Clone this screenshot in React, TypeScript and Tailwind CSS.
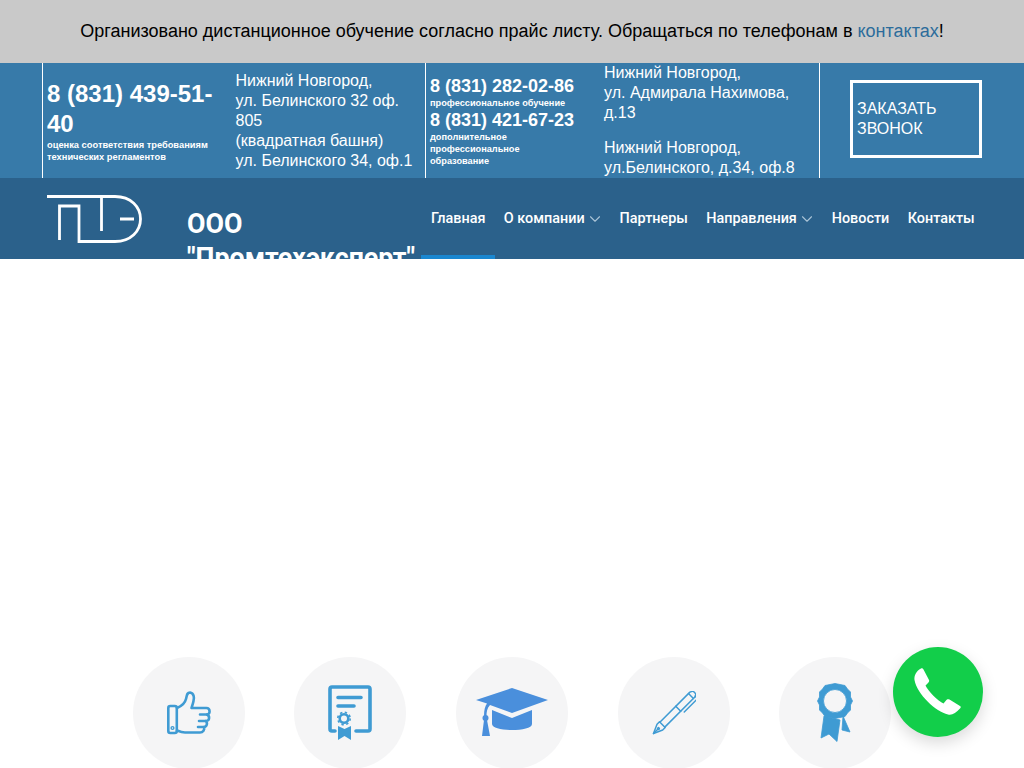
import React from "react";
import { ChevronDown } from "lucide-react";

const navItems = [
  { label: "Главная", active: true },
  { label: "О компании", sub: true },
  { label: "Партнеры" },
  { label: "Направления", sub: true },
  { label: "Новости" },
  { label: "Контакты" },
];

const ThumbIcon = () => (
  <svg width="44" height="44" viewBox="0 0 44 44" fill="none" stroke="#3f9bd3" strokeWidth="2.6" strokeLinejoin="round" strokeLinecap="round">
    <rect x="1.300" y="15" width="8.500" height="27" rx="2" />
    <circle cx="5.500" cy="37" r="1.400" strokeWidth="1.400" />
    <path d="M10 17 C15 15 18 12 19 8 C20 4 20 1.500 23 1.500 C27 2 27.500 7 26.500 10 C26 13 25 15 24.500 17 L39.500 17 C43.500 17 43.500 23.500 40 23.500 C43 25 43 30 38.500 30 C41 31.500 40 36 37 36 C38 38.500 36 41.500 33 41.500 L18 41.500 C15 41.500 12.500 40.500 10 39.500" />
    <path d="M33 23.500 L40 23.500 M32 30 L38.500 30 M31 36 L37 36" />
  </svg>
);

const CertificateIcon = () => (
  <svg width="44" height="56" viewBox="0 0 44 56" fill="none" stroke="#3f9bd3" strokeWidth="3.600" strokeLinecap="round" strokeLinejoin="round">
    <path d="M7 46 L4 46 C2.500 46 2 45 2 44 L2 4 C2 2.500 3 2 4 2 L40 2 C41.500 2 42 3 42 4 L42 44 C42 45 41.500 46 40 46 L28 46" />
    <path d="M10 12.500 L33 12.500 M10 21 L26 21" />
    <circle cx="16" cy="33.500" r="4.300" strokeWidth="2.600" />
    <circle cx="16" cy="33.500" r="6.200" strokeWidth="1.600" strokeLinecap="butt" strokeDasharray="2.400 2.470" />
    <path d="M10 41 L10 55 L16.500 51 L23 55 L23 41 L16.500 44 Z" fill="#3f9bd3" stroke="none" />
  </svg>
);

const CapIcon = () => (
  <svg width="72" height="50" viewBox="0 0 72 50" fill="#4a8fdc">
    <path d="M36 0 L72 12 L36 25 L14 17 C11 20 10.500 24 10.500 28 L8 28 C8 22 9 18 11 15.500 L0 12 Z" />
    <path d="M16 22 L36 30 L56 22 L56 36 C56 44 16 44 16 36 Z" />
    <circle cx="9.500" cy="30" r="3" />
    <path d="M8 32 L11 32 L14 48 L6 48 Z" />
  </svg>
);

const PenIcon = () => (
  <svg width="44" height="44" viewBox="0 0 44 44" fill="none" stroke="#3f9bd3" strokeWidth="1.500" strokeLinejoin="round" strokeLinecap="round">
    <g transform="rotate(45 22 22)">
      <path d="M22 51 L18 42 L18 38.500 L26 38.500 L26 42 Z" />
      <path d="M22 51 L22 45" />
      <circle cx="22" cy="44" r="0.900" />
      <path d="M18.500 38.500 L18.500 -4 L20 -7 L24 -7 L25.500 -4 L25.500 38.500" />
      <path d="M18.500 16 L25.500 16 M18.500 -2 L25.500 -2" />
      <path d="M25.500 -5 L28.500 -5 L28.500 14" />
    </g>
  </svg>
);

const MedalIcon = () => (
  <svg width="36" height="60" viewBox="0 0 36 60" fill="#3f9bd3" stroke="#3f9bd3" strokeWidth="0.800" strokeLinejoin="round">
    <path d="M7 33 L23 37 L20 58.500 L12 51 L4 55 Z" />
    <path d="M26 33 L33 49 L25 47 Z" />
    <path
      fillRule="evenodd"
      d="M18 0.500 L23 1.500 L28 2.500 L30.500 6 L33.500 9 L33.500 14 L35.500 18 L33.500 22 L33.500 27 L30.500 30 L28 33.500 L23 34.500 L18 35.500 L13 34.500 L8 33.500 L5.500 30 L2.500 27 L2.500 22 L0.500 18 L2.500 14 L2.500 9 L5.500 6 L8 2.500 L13 1.500 Z M18 6.500 A11.500 11.500 0 1 0 18.010 29.500 A11.500 11.500 0 1 0 18 6.500 Z"
    />
  </svg>
);

const PhoneIcon = () => (
  <svg width="48" height="48" viewBox="0 0 48 48" fill="#ffffff">
    <path d="M7 0.500 C8 0 9 0.500 9.500 1.500 L15 12 C15.500 13 15 14 14 15 L11.500 17.500 C14 23 24 33 29.500 35.500 L32 32.500 C33 31 34 31 35.500 31.500 L46 38 C47 38.500 47 39.500 46 40.500 C42 45 38 47.500 34 46.500 C22 44 3 26 0.500 12 C0 8 2 3 7 0.500 Z" />
  </svg>
);

const badges = [
  <ThumbIcon />,
  <CertificateIcon />,
  <CapIcon />,
  <PenIcon />,
  <MedalIcon />,
];

export default function App() {
  return (
    <div className="relative h-screen overflow-hidden bg-white font-['Liberation_Sans',Arial,sans-serif]">
      {/* Notice */}
      <div className="flex h-[63px] items-center justify-center bg-[#c9c9c9] text-[18px] text-black">
        <p>
          Организовано дистанционное обучение согласно прайс листу. Обращаться по телефонам в{" "}
          <span className="text-[#2c6c9b]">контактах</span>!
        </p>
      </div>

      {/* Contacts */}
      <div className="flex h-[115px] bg-[#377aa9] pl-[42px] text-white">
        <div className="flex w-[383px] border-l border-white pl-1">
          <div className="w-[188.500px] pt-4">
            <div className="text-[24px] leading-[30px] font-bold">8 (831) 439-51-40</div>
            <div className="w-[170px] text-[9.300px] leading-3 font-bold">
              оценка соответствия требованиям технических регламентов
            </div>
          </div>
          <div className="w-[182px] pt-2 text-[16px] leading-[19.950px]">
            Нижний Новгород,
            <br />
            ул. Белинского 32 оф. 805
            <br />
            (квадратная башня)
            <br />
            ул. Белинского 34, оф.1
          </div>
        </div>
        <div className="flex w-[394px] border-l border-white pl-1">
          <div className="w-[174px] pt-3">
            <div className="text-[18px] leading-[22px] font-bold">8 (831) 282-02-86</div>
            <div className="text-[9.200px] leading-3 font-bold">профессиональное обучение</div>
            <div className="text-[18px] leading-[22px] font-bold">8 (831) 421-67-23</div>
            <div className="w-[120px] text-[9.200px] leading-3 font-bold">
              дополнительное профессиональное образование
            </div>
          </div>
          <div className="w-[200px] text-[16px] leading-[19.800px]">
            <p>
              Нижний Новгород,
              <br />
              ул. Адмирала Нахимова, д.13
            </p>
            <p className="mt-4">
              Нижний Новгород,
              <br />
              ул.Белинского, д.34, оф.8
            </p>
          </div>
        </div>
        <div className="border-l border-white pt-[17px] pl-[30px]">
          <div className="flex h-[78px] w-[132px] items-center border-[3px] border-white pl-1 text-[16px] leading-5">
            ЗАКАЗАТЬ
            <br />
            ЗВОНОК
          </div>
        </div>
      </div>

      {/* Navigation */}
      <div className="flex h-[81px] overflow-hidden bg-[#2b618b] pl-[46px]">
        <svg className="mt-[17px] shrink-0" width="96" height="48" viewBox="0 0 96 48" fill="none" stroke="#ffffff" strokeWidth="2.800">
          <path d="M1 1.500 L69 1.500 C85 1.500 94.500 12 94.500 24 C94.500 36 85 46.500 69 46.500 L33 46.500 L33 11 L13.500 11 L13.500 45" />
          <path d="M55.500 1.500 L55.500 36 M74 24 L88 24" />
        </svg>
        <div className="ml-[45px] w-[244px] shrink-0 pt-[29px] font-['Roboto',sans-serif] text-[26.800px] leading-[34px] font-bold text-white">
          ООО
          <br />
          "Промтехэксперт"
        </div>
        <ul className="flex gap-[18.400px] pt-[32px] font-['Roboto',sans-serif] text-[14.400px] leading-[18px] font-medium text-white">
          {navItems.map((item) => (
            <li key={item.label} className="relative flex h-[18px] items-center whitespace-nowrap">
              {item.label}
              {item.sub && (
                <ChevronDown className="-mr-[3px] ml-[1.500px] h-[18px] w-[18px] text-[#a9c3d6]" strokeWidth={1.500} />
              )}
              {item.active && <span className="absolute top-[45px] right-[-10px] left-[-10px] h-1 bg-[#1a87d0]" />}
            </li>
          ))}
        </ul>
      </div>

      {/* Feature badges */}
      <div className="mt-[398px] grid grid-cols-5 px-[108px]">
        {badges.map((icon, i) => (
          <div key={i} className="flex justify-center">
            <div className="flex h-28 w-28 items-center justify-center rounded-full bg-[#f5f5f6]">{icon}</div>
          </div>
        ))}
      </div>

      {/* Call button */}
      <div className="absolute top-[647px] left-[893px] flex h-[90px] w-[90px] items-center justify-center rounded-full bg-[#12ce4a] shadow-[0_6px_16px_rgba(0,0,0,0.15)]">
        <PhoneIcon />
      </div>
    </div>
  );
}
